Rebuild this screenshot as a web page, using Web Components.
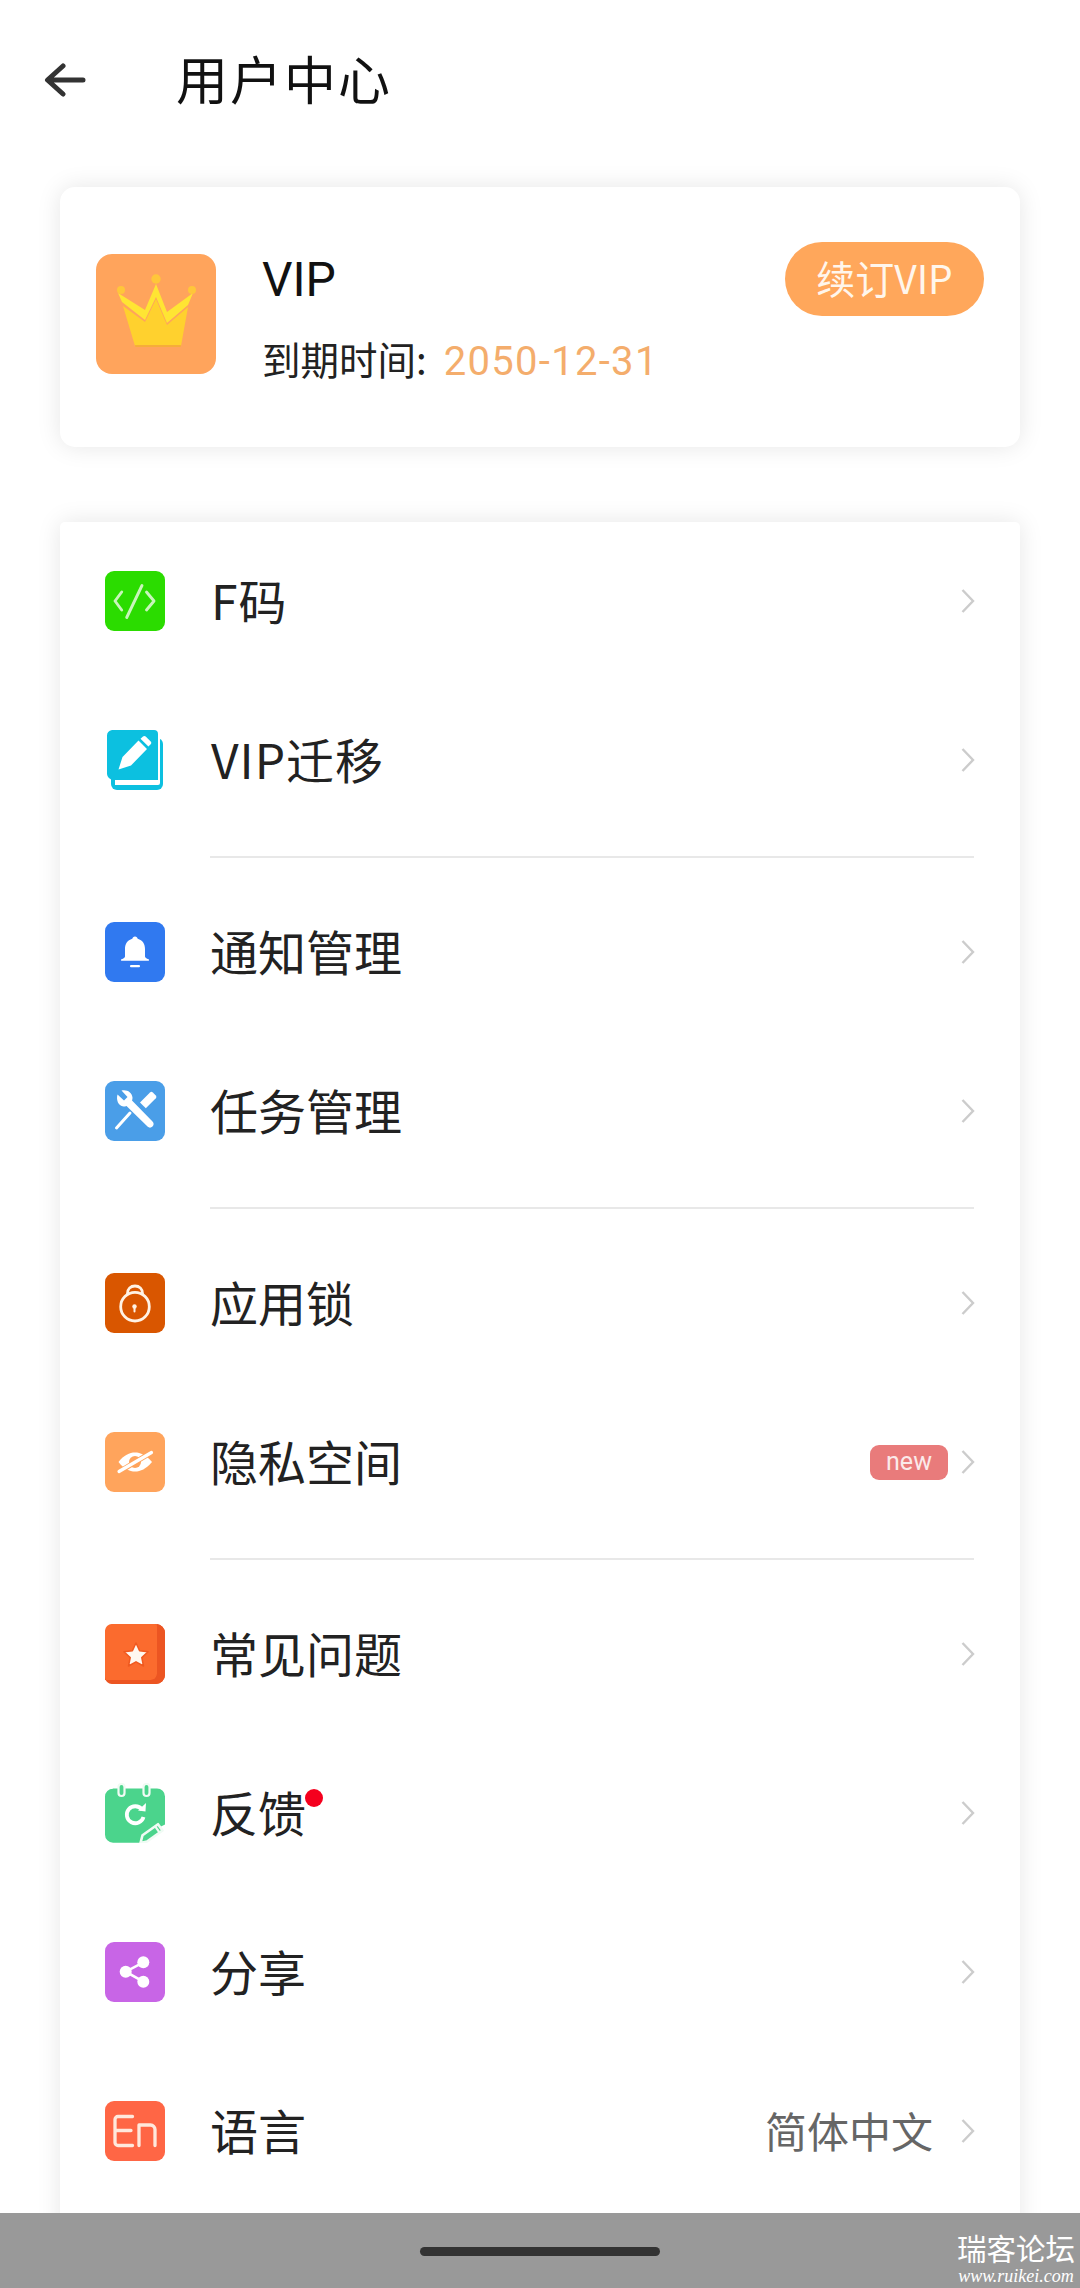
<!DOCTYPE html>
<html lang="zh-CN">
<head>
<meta charset="utf-8">
<title>用户中心</title>
<style>
html,body{margin:0;padding:0;background:#fff}
body{width:1080px;height:2288px;overflow:hidden;font-family:Roboto,"Noto Sans CJK SC",sans-serif;color:#222;display:flex;flex-direction:column}
</style>
</head>
<body>
<app-header title-text="用户中心"></app-header>
<page-main>
  <vip-card></vip-card>
  <menu-list>
    <menu-group divider>
      <menu-row icon="code" label="F码" wide></menu-row>
      <menu-row icon="book" label="VIP迁移" wide></menu-row>
    </menu-group>
    <menu-group divider>
      <menu-row icon="bell" label="通知管理"></menu-row>
      <menu-row icon="tools" label="任务管理"></menu-row>
    </menu-group>
    <menu-group divider>
      <menu-row icon="lock" label="应用锁"></menu-row>
      <menu-row icon="eye" label="隐私空间" badge="new"></menu-row>
    </menu-group>
    <menu-group>
      <menu-row icon="star" label="常见问题"></menu-row>
      <menu-row icon="note" label="反馈" dot></menu-row>
      <menu-row icon="share" label="分享"></menu-row>
      <menu-row icon="en" label="语言" value="简体中文"></menu-row>
    </menu-group>
  </menu-list>
</page-main>
<nav-bar></nav-bar>
<script>
const ICONS={
code:`<rect width="60" height="60" rx="9" fill="#2bdc00"/><g fill="none" stroke="#c9f5bb" stroke-width="2.900" stroke-linecap="round" stroke-linejoin="round"><path d="M16.700 21 10 30l6.700 9M41.500 21 49 30l-7.500 9M37 14.500 21.700 46.500"/></g>`,
book:`<rect x="6" y="8" width="52" height="52" rx="6" fill="#0cc0e0"/><path d="M52 8v41.500H10V55h43a2 2 0 0 0 2-2V8z" fill="#fff"/><path d="M7 0h42a4 4 0 0 1 4 4v46H8a6.500 6.500 0 0 1-6-6V6a6 6 0 0 1 5-6z" fill="#0cc0e0"/><path d="M13.500 39.500 17.500 27 33.500 10.500 42 19 26 35.500zM35.500 8.700l2.500-2.200a2 2 0 0 1 2.700 0l5 5a2 2 0 0 1 0 2.700l-2.300 2.400z" fill="#fff"/>`,
bell:`<rect width="60" height="60" rx="9" fill="#3079f0"/><path d="M30 14.500c1.500 0 2.500 1 2.700 2.300 5 1.400 7.300 5.500 7.300 10.200v7.500c0 1.200 1.500 2 3.500 2.800.8.300.8 1.400 0 1.400H16.500c-.8 0-.8-1.100 0-1.400 2-.8 3.500-1.600 3.500-2.800V27c0-4.700 2.300-8.800 7.300-10.200.2-1.300 1.200-2.300 2.700-2.300z" fill="#fff"/><rect x="25" y="43" width="10" height="2.200" rx="1" fill="#fff"/>`,
tools:`<rect width="60" height="60" rx="9" fill="#4a9ee8"/><path d="M12.500 13.500 19 19.500l3.500-3.500-6-6.500c5-1.400 10.500 1.500 11 7 .1 1-.1 2-.5 3L47.500 40.500c1.500 1.500 1.500 3.500 0 5s-3.500 1.500-5 0L21.500 25c-1 .4-2 .5-3 .5-5.500-.5-7.500-7-6-12z" fill="#fff"/><path d="m35 21.500 10-10a2 2 0 0 1 2.800 0l3 3a2 2 0 0 1 0 2.800l-10 10z" fill="#fff"/><path d="M25 32 11.500 47" stroke="#fff" stroke-width="3" stroke-linecap="round"/>`,
lock:`<rect width="60" height="60" rx="9" fill="#d95600"/><circle cx="30" cy="33.700" r="14.300" fill="none" stroke="#fff2e4" stroke-width="2.800"/><path d="M22.500 21.500v-1c0-4.500 3.200-7.500 7.500-7.500s7.500 3 7.500 7.500v1" fill="none" stroke="#fff2e4" stroke-width="2.800"/><circle cx="29.500" cy="33.500" r="2.200" fill="#fff2e4"/><rect x="28.500" y="34" width="2" height="5.500" rx="1" fill="#fff2e4"/>`,
eye:`<rect width="60" height="60" rx="9" fill="#ffa45c"/><path d="M13.500 30C19 23 24.500 20.500 30 20.500s11 2.500 17 9.500C41 37 35.500 39.500 30 39.500S19 37 13.500 30z" fill="#fff"/><circle cx="30" cy="30" r="6" fill="#ffa45c"/><path d="M13 40.500 47 20" stroke="#ffa45c" stroke-width="5"/><path d="M14 39.500 46.500 20.500" stroke="#fff" stroke-width="3.200" stroke-linecap="round"/>`,
star:`<rect width="60" height="60" rx="9" fill="#ec5522"/><path d="M7 0h43a2 2 0 0 1 2 2v48a6 6 0 0 1-6 6H0V7a7 7 0 0 1 7-7z" fill="#fb6b2e"/><path d="M0 53a7 7 0 0 0 7 7h44a9 9 0 0 0 9-9V9a9 9 0 0 0-8-9v50a6 6 0 0 1-6 6H0z" fill="#ec5522"/><path d="m31 19 3.600 7.800 8.400 1-6.200 5.800 1.700 8.400-7.500-4.200-7.500 4.200 1.700-8.400-6.200-5.800 8.400-1z" fill="#fff8f0" stroke="#f0591f" stroke-width="1.500" stroke-linejoin="round"/>`,
note:`<path d="M8 5.500h44a8 8 0 0 1 8 8V41.500L36 53.500v6.200H8a8 8 0 0 1-8-8v-38a8 8 0 0 1 8-8z" fill="#4bd48c"/><g fill="#4bd48c" stroke="#f0fbf4" stroke-width="2.200"><rect x="13.500" y="1" width="6" height="12" rx="3"/><rect x="38.500" y="1" width="6" height="12" rx="3"/></g><path d="M37 26.500a8.500 8.500 0 1 0 1.500 7.500" fill="none" stroke="#fff" stroke-width="3.800"/><path d="m33 27.500 7.500 1 .5-8.500z" fill="#fff"/><path d="m37.500 52.200 15.500-11 4.500 6.300-15.500 11-6.500 1.500z" fill="#4bd48c" stroke="#f0fbf4" stroke-width="2.600" stroke-linejoin="round"/><path d="m50 43.200 4.500 6.300" stroke="#f0fbf4" stroke-width="2.200"/>`,
share:`<rect width="60" height="60" rx="9" fill="#c865e6"/><path d="M38.300 20.300 20.700 29.700l17.600 10" fill="none" stroke="#fff" stroke-width="2.600"/><circle cx="38.300" cy="20.300" r="6" fill="#fff"/><circle cx="20.700" cy="29.700" r="6" fill="#fff"/><circle cx="38.300" cy="39.700" r="6" fill="#fff"/>`,
en:`<rect width="60" height="60" rx="9" fill="#ff6645"/><g fill="none" stroke="#ffe8dc" stroke-width="3.300" stroke-linecap="round" stroke-linejoin="round"><path d="M27.500 15.500H13a3 3 0 0 0-3 3v23a3 3 0 0 0 3 3h14.500M10 29.500h16"/><path d="M34 44.500V24h11.500a4.500 4.500 0 0 1 4.500 4.500v16"/></g>`
};
function define(name,html,init){
  customElements.define(name,class extends HTMLElement{
    constructor(){super();this.attachShadow({mode:"open"}).innerHTML=html;}
    connectedCallback(){if(init)init.call(this,this.shadowRoot);}
  });
}
define("app-header",`<style>
:host{display:flex;align-items:center;height:160px;flex:none;box-sizing:border-box;padding-left:44px}
svg{width:42px;height:34px;flex:none;display:block}
h1{margin:0 0 6px 90px;font:400 52px "Noto Sans CJK SC",sans-serif;letter-spacing:2px;color:#111}
</style>
<svg viewBox="0 0 42 34" aria-hidden="true"><path d="M39 17H4M19 3 3.500 17 19 31" fill="none" stroke="#333" stroke-width="5" stroke-linecap="round" stroke-linejoin="round"/></svg>
<h1></h1>`,function(s){s.querySelector("h1").textContent=this.getAttribute("title-text");});
define("page-main",`<style>
:host{display:block;flex:1 1 0;min-height:0;overflow:hidden;padding:27px 60px 0;box-sizing:border-box}
</style><slot></slot>`);
define("vip-card",`<style>
:host{display:flex;align-items:flex-start;height:260px;box-sizing:border-box;padding:55px 36px 0;background:#fff;border-radius:15px;box-shadow:0 0 24px rgba(0,0,0,.1);margin-bottom:75px}
.ic{width:120px;height:120px;margin-top:12px;flex:none;display:block}
.info{flex:1;margin-left:46px;display:flex;flex-direction:column}
.name{font:400 48px/66px Roboto,sans-serif;color:#111;margin-top:5px}
.exp{display:flex;align-items:baseline;font:400 38.500px/50px "Noto Sans CJK SC",sans-serif;color:#222;margin-top:20px}
.date{font:400 40px/50px Roboto,sans-serif;color:#f4ad6c;letter-spacing:1.300px;margin-left:17px}
.btn{flex:none;width:199px;height:74px;box-sizing:border-box;border-radius:37px;background:#ffa75b;color:#fff6ec;display:flex;align-items:center;justify-content:center;font:400 39px "Noto Sans CJK SC",sans-serif;padding-bottom:4px}
</style>
<svg class="ic" viewBox="0 0 120 120" aria-hidden="true"><rect width="120" height="120" rx="16" fill="#ffa45c"/><path d="M27 52 49 68 60 45 71 71 92 53 85 92H39z" fill="#ffd12e"/><path d="M39 91H85L84.500 93H39.500z" fill="#f6ad3a"/><path d="M22 39 26 48 49 66 60 43 71 69 92 51 97 39 71 58 60 30 49 56z" fill="#ffe533"/><circle cx="60" cy="25" r="4.700" fill="#ffc63a"/><circle cx="25" cy="36" r="4" fill="#ffc63a"/><circle cx="96" cy="36" r="4" fill="#ffc63a"/></svg>
<div class="info"><div class="name">VIP</div><div class="exp"><span>到期时间:</span><span class="date">2050-12-31</span></div></div>
<div class="btn">续订VIP</div>`);
define("menu-list",`<style>
:host{display:block;background:#fff;border-radius:5px;box-shadow:0 0 24px rgba(0,0,0,.1);padding-bottom:60px}
</style><slot></slot>`);
define("menu-group",`<style>
:host{display:block}
.d{display:none;height:2px;background:#e8e8e8;margin:16px 46px 15px 150px}
:host([divider]) .d{display:block}
</style><slot></slot><div class="d"></div>`);
define("menu-row",`<style>
:host{display:flex;align-items:center;height:159px;box-sizing:border-box;padding:0 45px}
svg.ic{width:60px;height:60px;flex:none;display:block;margin-bottom:1px}
.t{position:relative;margin:0 0 6px 45px;font:400 48px "Noto Sans CJK SC",Roboto,sans-serif;color:#222;white-space:nowrap;flex:none}
:host([wide]) .t{margin-left:46px;letter-spacing:1px}
.sp{flex:1}
.v{font:400 42px "Noto Sans CJK SC",sans-serif;color:#666;margin:0 28px 4px 0}
.b{width:78px;height:35px;border-radius:9px;background:#e97b7b;color:#fbeaea;font:400 25px/33px Roboto,sans-serif;text-align:center;margin-right:13px}
.dot{position:absolute;right:-17px;top:13px;width:18px;height:18px;border-radius:50%;background:#f5001e}
.ch{width:14px;height:26px;flex:none;display:block;margin-bottom:2px}
</style>
<svg class="ic" viewBox="0 0 60 60" aria-hidden="true"></svg>
<div class="t"><span></span></div><div class="sp"></div>
<svg class="ch" viewBox="0 0 14 26" aria-hidden="true"><path d="M1.500 2 12 13 1.500 24" fill="none" stroke="#ccc" stroke-width="2.400"/></svg>`,function(s){
  s.querySelector("svg.ic").innerHTML=ICONS[this.getAttribute("icon")];
  s.querySelector(".t span").textContent=this.getAttribute("label");
  const ch=s.querySelector(".ch");
  if(this.hasAttribute("dot")){const d=document.createElement("i");d.className="dot";s.querySelector(".t").append(d);}
  if(this.hasAttribute("value")){const v=document.createElement("div");v.className="v";v.textContent=this.getAttribute("value");ch.before(v);}
  if(this.hasAttribute("badge")){const b=document.createElement("div");b.className="b";b.textContent=this.getAttribute("badge");ch.before(b);}
});
define("nav-bar",`<style>
:host{display:flex;position:relative;align-items:center;justify-content:center;flex:none;height:75px;background:#999}
.h{width:240px;height:9px;border-radius:5px;background:#333;margin-top:1px}
.w{position:absolute;right:5px;top:20px;width:118px;color:#fff;text-align:center}
.w b{display:block;font:400 29.500px/34px "Liberation Serif","Noto Sans CJK SC",serif;white-space:nowrap}
.w i{display:block;font:italic 400 18px/21px "Liberation Serif",serif;white-space:nowrap;margin-top:-1px}
</style><div class="h"></div><div class="w"><b>瑞客论坛</b><i>www.ruikei.com</i></div>`);
</script>
</body>
</html>
